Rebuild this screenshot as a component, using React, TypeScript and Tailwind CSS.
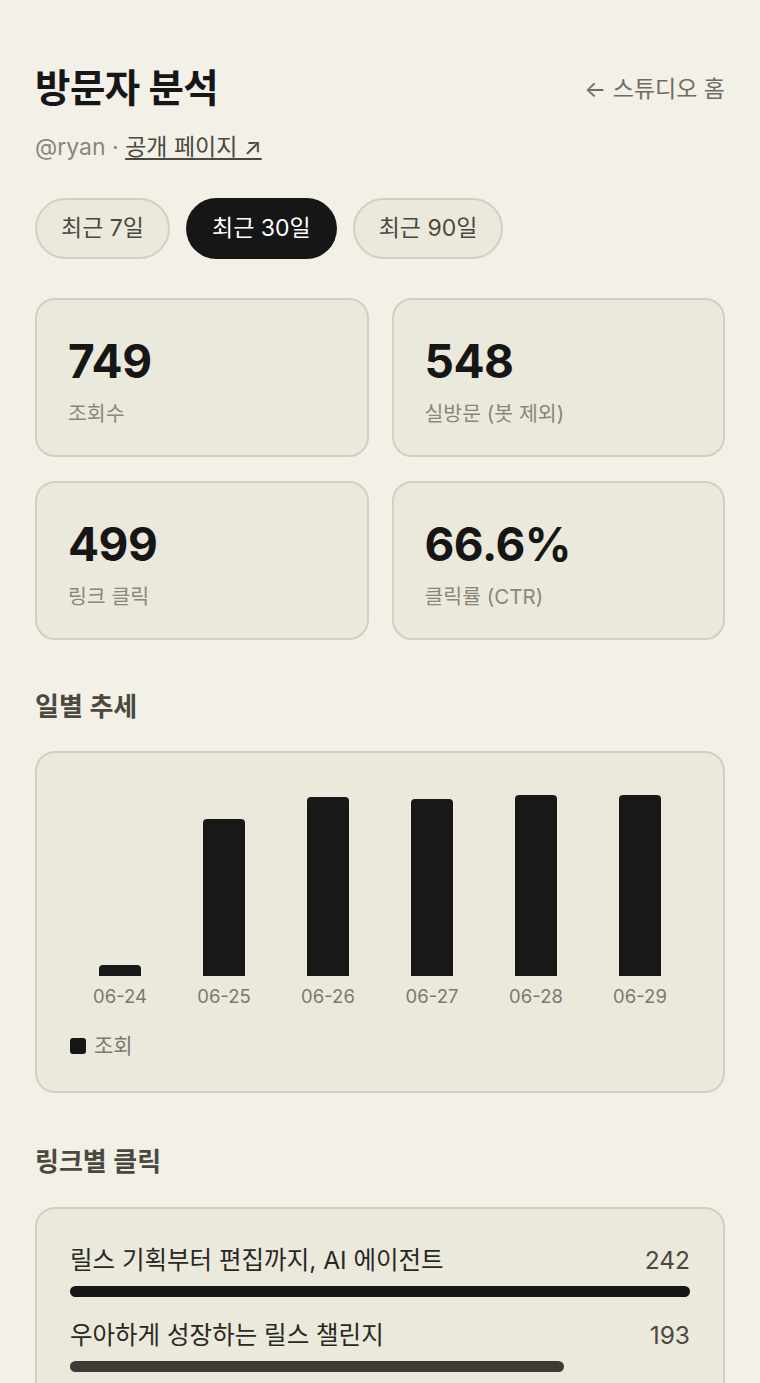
import { type ReactNode } from 'react'

const FONT = 'font-[Inter,"Noto_Sans_CJK_KR",sans-serif]'

const stats = [
  { value: '749', label: '조회수' },
  { value: '548', label: '실방문 (봇 제외)' },
  { value: '499', label: '링크 클릭' },
  { value: '66.6%', label: '클릭률 (CTR)' },
]

const daily = [
  { day: '06-24', views: 9 },
  { day: '06-25', views: 133 },
  { day: '06-26', views: 151 },
  { day: '06-27', views: 150 },
  { day: '06-28', views: 153 },
  { day: '06-29', views: 153 },
]

const links = [
  { title: '릴스 기획부터 편집까지, AI 에이전트', clicks: 242 },
  { title: '우아하게 성장하는 릴스 챌린지', clicks: 193 },
]

const Card = ({ children, className }: { children: ReactNode; className?: string }) => (
  <div className={`rounded-[20px] border-2 border-[#d3cfc1] bg-[#ebe8dc] ${className ?? ''}`}>
    {children}
  </div>
)

const Pill = ({ label, active }: { label: string; active?: boolean }) => (
  <button
    className={
      active
        ? 'h-[61px] rounded-full bg-[#161616] px-[26px] text-[23px] text-white'
        : 'h-[61px] rounded-full border-2 border-[#d3cfc1] bg-[#ebe8dc] px-[24px] text-[23px] text-[#4b4840]'
    }
  >
    {label}
  </button>
)

export default function App() {
  const maxViews = Math.max(...daily.map((d) => d.views))
  const maxClicks = Math.max(...links.map((l) => l.clicks))

  return (
    <div className={`min-h-screen bg-[#f3f0e8] px-[35px] pt-[60px] pb-10 ${FONT}`}>
      <header className="flex items-start justify-between">
        <h1 className="text-[38.5px] font-bold leading-[56px] tracking-[-0.5px] text-[#161616]">
          방문자 분석
        </h1>
        <a className="mt-[12px] text-[23px] text-[#6f6b62]">← 스튜디오 홈</a>
      </header>
      <p className="mt-[16px] text-[23px] leading-[30px] text-[#8a867c]">
        @ryan ·{' '}
        <a className="text-[#4b4840] underline underline-offset-[3px] decoration-[1.5px]">
          공개 페이지 ↗
        </a>
      </p>

      <div className="mt-[36px] flex gap-[16px]">
        <Pill label="최근 7일" />
        <Pill label="최근 30일" active />
        <Pill label="최근 90일" />
      </div>

      <div className="mt-[39px] grid grid-cols-2 gap-x-[23px] gap-y-[24px]">
        {stats.map((s) => (
          <Card key={s.label} className="h-[159px] px-[31px] pt-[33px]">
            <div className="text-[46px] font-bold leading-[56px] tracking-[-0.5px] text-[#161616]">
              {s.value}
            </div>
            <div className="mt-[10px] text-[20.5px] leading-[30px] text-[#8a867c]">{s.label}</div>
          </Card>
        ))}
      </div>

      <h2 className="mt-[49px] text-[26px] font-semibold leading-[36px] text-[#4b4840]">일별 추세</h2>

      <Card className="mt-[26px] px-[31px] pt-[38px] pb-[33px]">
        <div className="grid h-[185px] grid-cols-6 items-end">
          {daily.map((d) => (
            <div key={d.day} className="flex justify-center">
              <div
                className="w-[42px] rounded-t-[4px] bg-[#181818]"
                style={{ height: `${Math.round((d.views / maxViews) * 181)}px` }}
              />
            </div>
          ))}
        </div>
        <div className="mt-[8px] grid grid-cols-6">
          {daily.map((d) => (
            <div key={d.day} className="text-center text-[18.5px] leading-[24px] text-[#7d796f]">
              {d.day}
            </div>
          ))}
        </div>
        <div className="mt-[26px] flex items-center gap-[8px] pl-[2px]">
          <span className="h-[16px] w-[16px] rounded-[3px] bg-[#161616]" />
          <span className="text-[21px] leading-[24px] text-[#7d796f]">조회</span>
        </div>
      </Card>

      <h2 className="mt-[51px] text-[26px] font-semibold leading-[36px] text-[#4b4840]">링크별 클릭</h2>

      <Card className="mt-[27px] px-[33px] pt-[35px] pb-[30px]">
        <div className="flex flex-col gap-[22px]">
          {links.map((l, i) => (
            <div key={l.title}>
              <div className="flex items-center justify-between text-[24.5px] leading-[32px] text-[#2a2824]">
                <span>{l.title}</span>
                <span className="text-[#4b4840]">{l.clicks}</span>
              </div>
              <div className="mt-[10px] h-[11px] w-full">
                <div
                  className={`h-full rounded-full ${i === 0 ? 'bg-[#161616]' : 'bg-[#3c3b38]'}`}
                  style={{ width: `${(l.clicks / maxClicks) * 100}%` }}
                />
              </div>
            </div>
          ))}
        </div>
      </Card>
    </div>
  )
}
